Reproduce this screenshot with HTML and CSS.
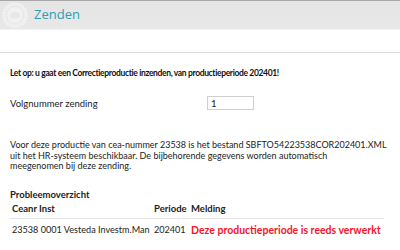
FILE: index.html
```html
<!DOCTYPE html>
<html>
<head>
    <title>Zenden</title>
    <meta name="viewport" content="width=device-width, initial-scale=1">
    <link rel="stylesheet" href="styles.css">
</head>
<body>
    <div class="titlebar">
        <svg class="logo" width="26" height="26" viewBox="0 0 26 26">
            <circle cx="13" cy="13" r="12" fill="#eeeeee" stroke="#f4f4f4" stroke-width="1.5" stroke-dasharray="2 1.2"/>
            <circle cx="13" cy="13" r="8.5" fill="#f1f1f1" stroke="#e6e6e6" stroke-width="1"/>
            <path d="M8 15 q0 -5 5 -5 q5 0 5 5 z" fill="#e6e6e6"/>
            <path d="M9 15 h8 v1.5 h-8 z" fill="#e9e9e9"/>
        </svg>
        <h1>Zenden</h1>
    </div>

    <div class="content">
        <p class="warning">Let op: u gaat een Correctieproductie inzenden, van productieperiode 202401!</p>

        <div class="field">
            <label for="volgnummer">Volgnummer zending</label>
            <input id="volgnummer" type="text" value="1">
        </div>

        <p class="info">Voor deze productie van cea-nummer 23538 is het bestand SBFTO54223538COR202401.XML<br>
        uit het HR-systeem beschikbaar. De bijbehorende gegevens worden automatisch<br>
        meegenomen bij deze zending.</p>

        <h2>Probleemoverzicht</h2>
        <table class="problems">
            <thead>
                <tr>
                    <th class="col-inst">Ceanr Inst</th>
                    <th class="col-periode">Periode</th>
                    <th>Melding</th>
                </tr>
            </thead>
            <tbody>
                <tr>
                    <td>23538 0001 Vesteda Investm.Man</td>
                    <td>202401</td>
                    <td class="melding">Deze productieperiode is reeds verwerkt</td>
                </tr>
            </tbody>
        </table>
    </div>
</body>
</html>
```

FILE: styles.css
```css
body {
    margin: 0;
    font-family: Lato, "Open Sans", Arial, sans-serif;
    font-size: 9.5px;
    color: #222;
    background: #fff;
}
.titlebar {
    display: flex;
    align-items: center;
    height: 28px;
    padding-left: 2px;
    background: linear-gradient(#e5e5e5, #e8e8e8);
    border-top: 1px solid #a8a8a8;
    border-bottom: 1px solid #f2f2f2;
}
.logo {
    margin-right: 6px;
}
.titlebar h1 {
    margin: 0 0 2px;
    font-family: "Open Sans", sans-serif;
    font-size: 13px;
    font-weight: normal;
    color: #2a9fb4;
}
.content {
    margin-top: 22px;
    border-top: 1px solid #dcdcdc;
    padding: 0 10px;
}
.warning {
    margin: 15px 0 0;
    font-size: 8.5px;
    font-weight: bold;
    letter-spacing: -0.35px;
    color: #111;
    white-space: nowrap;
}
.field {
    display: flex;
    align-items: center;
    margin-top: 18px;
}
.field label {
    width: 197px;
}
.field input {
    width: 39px;
    height: 12px;
    padding: 0 3px;
    border: 1px solid #cfcfcf;
    font-family: inherit;
    font-size: 9.5px;
    color: #222;
}
.info {
    margin: 30px 0 0;
    font-size: 9px;
    line-height: 10.5px;
    white-space: nowrap;
}
h2 {
    margin: 17px 0 0;
    font-size: 9.5px;
    font-weight: bold;
}
.problems {
    border-collapse: collapse;
    margin-top: 1px;
    width: 374px;
}
.problems th {
    text-align: left;
    padding: 2px 2px 4px 2px;
    border-bottom: 1px solid #e4e4e4;
}
.problems td {
    padding: 5px 2px 0 2px;
    font-size: 9.1px;
    white-space: nowrap;
}
.col-inst {
    width: 138px;
}
.col-periode {
    width: 33px;
}
.problems td.melding {
    color: #f5142a;
    font-weight: bold;
    font-size: 10.5px;
}
```
